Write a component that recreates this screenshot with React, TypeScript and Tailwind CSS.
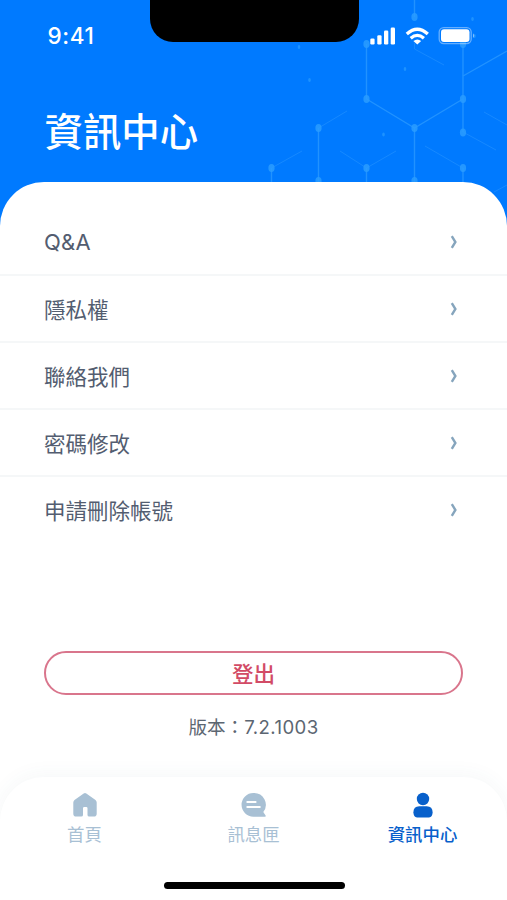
import React from 'react';

const rows = ['Q&A', '隱私權', '聯絡我們', '密碼修改', '申請刪除帳號'];

const nodes: [number, number][] = [
  [414.5, 17], [366.5, 44], [463, 44], [366.5, 99], [463, 99], [318.5, 128], [414.5, 128],
  [463, 132.5], [271.5, 168], [366.5, 168], [463, 168], [318.5, 181], [414.5, 181],
];
const dots: [number, number][] = [[309.5, 80], [405, 69], [383.5, 134.5], [472.5, 19], [474.5, 36], [299, 47]];

function Pattern() {
  return (
    <svg className="absolute right-0 top-0" width="253" height="225" viewBox="254 0 253 225" fill="none">
      <g stroke="#2c9bff" strokeWidth="1.4" opacity=".75">
        <path d="M414.5 0V17M366.5 44V99M463 44V132M366.5 99L414.5 128L463 99M318.5 128V182M414.5 128V182" />
        <path d="M271.5 168V182M366.5 168V182M463 168V182M463 76L507 51" />
      </g>
      <g stroke="#2493ff" strokeWidth="1" opacity=".6">
        <path d="M414.5 43V49L444 65M318.5 128L347 111M271.5 168L302 151M340 151L366.5 168L396 151M425 146L463 168M463 132L496 150M484 112L507 125M494 192L507 185" />
      </g>
      <g fill="#2a9cff">
        {nodes.map(([x, y], i) => <ellipse key={i} cx={x} cy={y} rx="3.1" ry="3.9" opacity=".85" />)}
        {dots.map(([x, y], i) => <ellipse key={i} cx={x} cy={y} rx="1.3" ry="2" opacity=".7" />)}
      </g>
    </svg>
  );
}

function StatusIcons() {
  return (
    <svg className="absolute left-[368px] top-[24px]" width="110" height="24" viewBox="368 24 110 24" fill="#fff">
      <rect x="370.3" y="38.5" width="4.3" height="6" rx="1.3" />
      <rect x="377.3" y="35.3" width="4.3" height="9.2" rx="1.3" />
      <rect x="384" y="30.5" width="4.3" height="14" rx="1.3" />
      <rect x="390.7" y="27.5" width="4.3" height="17" rx="1.3" />
      <g fill="none" stroke="#fff" strokeWidth="3.3">
        <path d="M406.8 34Q417.3 24.5 427.8 34" />
        <path d="M410.7 38.3Q417.3 32.4 423.9 38.3" />
      </g>
      <path d="M413.4 41Q417.3 38 421.2 41L417.3 44.6Z" />
      <rect x="439.2" y="27.6" width="32" height="16" rx="4.5" fill="none" stroke="#fff" strokeOpacity=".4" strokeWidth="1.3" />
      <rect x="441" y="29.3" width="28.5" height="12.6" rx="3" />
      <path d="M473 33.2Q475.5 35.6 473 38Z" opacity=".45" />
    </svg>
  );
}

function HomeIcon() {
  return (
    <svg width="26" height="26" viewBox="0 0 26 26" fill="#a8c0d4">
      <path d="M11.7 1.4Q13 .4 14.3 1.4L23.5 8Q24.7 9 24.7 10.5V21.8Q24.7 24.6 21.9 24.6H17.2Q15.5 24.6 15.5 22.9V16.2Q15.5 14.9 14.2 14.9H12.3Q11 14.9 11 16.2V22.9Q11 24.6 9.3 24.6H4.1Q1.3 24.6 1.3 21.8V10.5Q1.3 9 2.5 8Z" />
    </svg>
  );
}

function ChatIcon() {
  return (
    <svg width="26" height="26" viewBox="0 0 26 26" fill="#a8c0d4">
      <path d="M12.4 1A11.8 11.8 0 1 0 12.4 24.7H23.8Q25.4 24.7 24.6 23.4L22.3 20A11.8 11.8 0 0 0 12.4 1Z" />
      <path d="M6.3 9.9H14.6M6.3 15.1H18.8" stroke="#fff" strokeWidth="2" strokeLinecap="round" />
    </svg>
  );
}

function UserIcon() {
  return (
    <svg width="26" height="26" viewBox="0 0 26 26" fill="#0860cb">
      <circle cx="13" cy="7" r="6.2" />
      <path d="M9.3 14.2H16.7Q22.6 14.2 22.6 20.3Q22.6 25.4 19 25.4H7Q3.4 25.4 3.4 20.3Q3.4 14.2 9.3 14.2Z" />
    </svg>
  );
}

export default function App() {
  return (
    <div className="flex h-[900px] w-[507px] flex-col overflow-hidden bg-white font-['Inter','Noto_Sans_CJK_TC',sans-serif]">
      <header className="relative h-[226px] shrink-0 bg-[#007aff] text-white">
        <Pattern />
        <div className="absolute left-[150px] top-0 h-[41.5px] w-[209px] rounded-b-[23px] bg-black" />
        <StatusIcons />
        <div className="pl-[47.5px] pt-[21px] text-[22.5px] font-medium leading-[30px] tracking-[0.6px]">9:41</div>
        <h1 className="pl-[44.5px] pt-[54px] text-[38.4px] font-medium leading-[54px]">資訊中心</h1>
      </header>

      <main className="relative -mt-[44.5px] flex h-[595.5px] shrink-0 flex-col rounded-t-[44px] bg-white pt-[27px]">
        <ul>
          {rows.map((label, i) => (
            <li
              key={label}
              className={`flex h-[67px] items-center justify-between pl-[44px] pr-[49px] text-[21.5px] text-[#535d70] ${i < 4 ? 'border-b-2 border-[#f5f7f8]' : ''}`}
            >
              <span className={i === 0 ? 'pt-[3px] text-[22px] tracking-[0.2px]' : i === 4 ? 'pt-[2px]' : 'pt-[4px]'}>{label}</span>
              <svg className={i < 4 ? 'mt-[2px]' : ''} width="8" height="14" viewBox="0 0 8 14" fill="none" stroke="#86a5bd" strokeWidth="2.4">
                <path d="M1.8 1.2L5.4 7L1.8 12.8" />
              </svg>
            </li>
          ))}
        </ul>
        <button className="mx-[44px] mt-[107.5px] flex h-[44px] shrink-0 items-center justify-center rounded-full border-2 border-[#d9758c] pt-[2px] text-[21.5px] font-medium text-[#d24b66]">
          登出
        </button>
        <p className="mt-[17px] text-center text-[18.6px] leading-[30px] text-[#5c6672]">
          版本：<span className="tracking-[0.4px]">7.2.1003</span>
        </p>
      </main>

      <nav className="relative flex h-[123px] shrink-0 flex-col rounded-t-[44px] bg-white shadow-[0_-2px_20px_rgba(60,90,110,0.05)]">
        <div className="grid grid-cols-3 pt-[15px] text-[17.4px] leading-[26px] text-[#a8c0d4]">
          <div className="flex flex-col items-center gap-[4px]"><HomeIcon /><span>首頁</span></div>
          <div className="flex flex-col items-center gap-[4px]"><ChatIcon /><span>訊息匣</span></div>
          <div className="flex flex-col items-center gap-[4px] font-medium text-[#0860cb]"><UserIcon /><span>資訊中心</span></div>
        </div>
        <div className="ml-[164px] mt-[34px] h-[7px] w-[181px] rounded-full bg-black" />
      </nav>
    </div>
  );
}
